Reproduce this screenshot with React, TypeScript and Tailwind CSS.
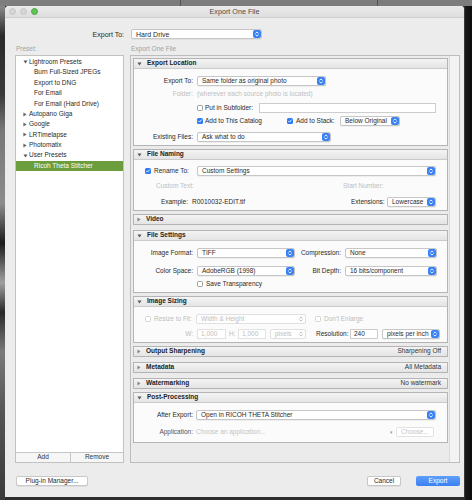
import React from "react";
import clsx from "clsx";

function Stepper({ disabled }: { disabled?: boolean }) {
  return (
    <span
      className={clsx(
        "flex h-[8px] w-[8px] shrink-0 items-center justify-center",
        !disabled && "rounded-[2px] bg-[#3a82f4]"
      )}
    >
      <svg
        viewBox="0 0 8 8"
        className="h-[8px] w-[8px]"
        fill="none"
        stroke={disabled ? "#b4b4b4" : "#ffffff"}
        strokeWidth="0.9"
        strokeLinecap="round"
        strokeLinejoin="round"
      >
        <path d="M2.7 3.2L4 1.9l1.3 1.3M2.7 4.8L4 6.1l1.3-1.3" />
      </svg>
    </span>
  );
}

function Select({ value, w, disabled }: { value: string; w: string; disabled?: boolean }) {
  return (
    <div
      className={clsx(
        "flex h-[10px] shrink-0 items-center justify-between rounded-[2px] border bg-white pl-[4px] pr-[0.5px]",
        disabled
          ? "border-[#e0e0e0] text-[#bcbcbc]"
          : "border-[#c6c6c6] text-[#2a2a2a] shadow-[0_0.5px_0.5px_rgba(0,0,0,0.1)]",
        w
      )}
    >
      <span className="whitespace-nowrap leading-none">{value}</span>
      <Stepper disabled={disabled} />
    </div>
  );
}

function Input({ value, w, disabled }: { value?: string; w: string; disabled?: boolean }) {
  return (
    <div
      className={clsx(
        "flex h-[10px] shrink-0 items-center border bg-white pl-[3px] leading-none",
        disabled ? "border-[#e2e2e2] text-[#bdbdbd]" : "border-[#cdcdcd] text-[#2a2a2a]",
        w
      )}
    >
      {value}
    </div>
  );
}

function Check({ on, disabled }: { on?: boolean; disabled?: boolean }) {
  if (on)
    return (
      <span className="flex h-[6px] w-[6px] shrink-0 items-center justify-center rounded-[1.5px] bg-[#2f7cf6]">
        <svg viewBox="0 0 6 6" className="h-[6px] w-[6px]" fill="none" stroke="#fff" strokeWidth="0.9" strokeLinecap="round" strokeLinejoin="round">
          <path d="M1.5 3.1l1 1 2-2.3" />
        </svg>
      </span>
    );
  return (
    <span
      className={clsx(
        "h-[6px] w-[6px] shrink-0 rounded-[1.5px] border bg-white",
        disabled ? "border-[#d4d4d4]" : "border-[#9c9c9c]"
      )}
    />
  );
}

function Label({ children, gray }: { children: React.ReactNode; gray?: boolean }) {
  return (
    <span className={clsx("w-[59px] shrink-0 text-right leading-none", gray && "text-[#bdbdbd]")}>
      {children}
    </span>
  );
}

function Row({ mt, children }: { mt?: string; children: React.ReactNode }) {
  return <div className={clsx("flex h-[10px] items-center", mt)}>{children}</div>;
}

function Section({
  title,
  open,
  right,
  mt,
  body,
  children,
}: {
  title: string;
  open?: boolean;
  right?: string;
  mt?: string;
  body?: string;
  children?: React.ReactNode;
}) {
  return (
    <div className={clsx("border border-[#b4b4b4] bg-[#fafafa]", mt)}>
      <div className="flex h-[9px] items-center bg-gradient-to-b from-[#f4f4f4] to-[#e4e4e4] pl-[3px] pr-[6px]">
        {open ? (
          <svg viewBox="0 0 6 5" className="h-[4px] w-[5px]">
            <path d="M0.5 0.5h5L3 4.5z" fill="#555" />
          </svg>
        ) : (
          <svg viewBox="0 0 5 6" className="h-[5px] w-[4px]">
            <path d="M0.5 0.5v5l4-2.5z" fill="#8a8a8a" />
          </svg>
        )}
        <span className="ml-[5px] text-[6.5px] font-bold leading-none text-[#222]">{title}</span>
        {right && <span className="ml-auto leading-none text-[#333]">{right}</span>}
      </div>
      {open && <div className={clsx("border-t border-[#cbcbcb] bg-[#fbfbfb]", body)}>{children}</div>}
    </div>
  );
}

const presets: { name: string; level: 0 | 1; open?: boolean; selected?: boolean }[] = [
  { name: "Lightroom Presets", level: 0, open: true },
  { name: "Burn Full-Sized JPEGs", level: 1 },
  { name: "Export to DNG", level: 1 },
  { name: "For Email", level: 1 },
  { name: "For Email (Hard Drive)", level: 1 },
  { name: "Autopano Giga", level: 0 },
  { name: "Google", level: 0 },
  { name: "LRTimelapse", level: 0 },
  { name: "Photomatix", level: 0 },
  { name: "User Presets", level: 0, open: true },
  { name: "Ricoh Theta Stitcher", level: 1, selected: true },
];

function PresetList() {
  return (
    <div className="flex h-[408px] w-[109px] flex-col border border-[#c2c2c2] bg-white">
      <div className="flex-1 pt-[1px]">
        {presets.map((p) => (
          <div
            key={p.name}
            className={clsx(
              "flex h-[10.4px] items-center leading-none",
              p.selected ? "bg-[#6b9d3c] text-white" : "text-[#2a2a2a]"
            )}
          >
            {p.level === 0 ? (
              <>
                <span className="ml-[7px] flex w-[6px] items-center">
                  {p.open ? (
                    <svg viewBox="0 0 6 5" className="h-[4px] w-[5px]">
                      <path d="M0.5 0.5h5L3 4.5z" fill="#555" />
                    </svg>
                  ) : (
                    <svg viewBox="0 0 5 6" className="h-[5px] w-[4px]">
                      <path d="M0.5 0.5v5l4-2.5z" fill="#666" />
                    </svg>
                  )}
                </span>
                <span>{p.name}</span>
              </>
            ) : (
              <span className="ml-[18px]">{p.name}</span>
            )}
          </div>
        ))}
      </div>
      <div className="flex h-[10px] border-t border-[#c6c6c6] bg-[#f6f6f6] text-[#333]">
        <span className="flex w-[55px] items-center justify-center border-r border-[#c6c6c6] leading-none">Add</span>
        <span className="flex flex-1 items-center justify-center leading-none">Remove</span>
      </div>
    </div>
  );
}

function SettingsPanel() {
  return (
    <div className="flex h-[408px] w-[330px] border border-[#bdbdbd] bg-[#ebebeb]">
      <div className="w-[318px] pl-[2px] pr-[1px] pt-[2px]">
        <Section title="Export Location" open body="pt-[7px] pb-[3px]">
          <Row>
            <Label>Export To:</Label>
            <span className="ml-[4px]" />
            <Select value="Same folder as original photo" w="w-[129px]" />
          </Row>
          <Row mt="mt-[3px]">
            <Label gray>Folder:</Label>
            <span className="ml-[4px] leading-none text-[#c0c0c0]">(wherever each source photo is located)</span>
          </Row>
          <Row mt="mt-[4px]">
            <span className="w-[63px] shrink-0" />
            <div className="flex w-[62px] shrink-0 items-center">
              <Check />
              <span className="ml-[2px] leading-none">Put in Subfolder:</span>
            </div>
            <Input w="w-[177px]" />
          </Row>
          <Row mt="mt-[3px]">
            <span className="w-[63px] shrink-0" />
            <div className="flex w-[90px] shrink-0 items-center">
              <Check on />
              <span className="ml-[2px] leading-none">Add to This Catalog</span>
            </div>
            <div className="flex w-[53px] shrink-0 items-center">
              <Check on />
              <span className="ml-[3px] leading-none">Add to Stack:</span>
            </div>
            <Select value="Below Original" w="w-[60px]" />
          </Row>
          <Row mt="mt-[6px]">
            <Label>Existing Files:</Label>
            <span className="ml-[4px]" />
            <Select value="Ask what to do" w="w-[134px]" />
          </Row>
        </Section>

        <Section title="File Naming" open mt="mt-[3px]" body="pt-[6px] pb-[3px]">
          <Row>
            <div className="flex w-[63px] shrink-0 items-center pl-[11px]">
              <Check on />
              <span className="ml-[3px] leading-none">Rename To:</span>
            </div>
            <Select value="Custom Settings" w="w-[239px]" />
          </Row>
          <Row mt="mt-[5px]">
            <span className="w-[209px] shrink-0 pl-[22px] leading-none text-[#c0c0c0]">Custom Text:</span>
            <span className="leading-none text-[#c0c0c0]">Start Number:</span>
          </Row>
          <Row mt="mt-[6px]">
            <span className="w-[54px] shrink-0 text-right leading-none">Example:</span>
            <span className="ml-[4px] w-[159px] shrink-0 leading-none">R0010032-EDIT.tif</span>
            <span className="w-[32px] shrink-0 leading-none">Extensions:</span>
            <span className="ml-[4px]" />
            <Select value="Lowercase" w="w-[49px]" />
          </Row>
        </Section>

        <Section title="Video" mt="mt-[3px]" />

        <Section title="File Settings" open mt="mt-[5px]" body="pt-[7px] pb-[3px]">
          <Row>
            <Label>Image Format:</Label>
            <span className="ml-[4px]" />
            <Select value="TIFF" w="w-[98px]" />
            <span className="w-[46px] shrink-0 text-right leading-none">Compression:</span>
            <span className="ml-[4px]" />
            <Select value="None" w="w-[92px]" />
          </Row>
          <Row mt="mt-[8px]">
            <Label>Color Space:</Label>
            <span className="ml-[4px]" />
            <Select value="AdobeRGB (1998)" w="w-[98px]" />
            <span className="w-[46px] shrink-0 text-right leading-none">Bit Depth:</span>
            <span className="ml-[4px]" />
            <Select value="16 bits/component" w="w-[92px]" />
          </Row>
          <Row mt="mt-[3px]">
            <span className="w-[63px] shrink-0" />
            <Check />
            <span className="ml-[3px] leading-none">Save Transparency</span>
          </Row>
        </Section>

        <Section title="Image Sizing" open mt="mt-[3px]" body="pt-[7px] pb-[3px]">
          <Row>
            <div className="flex w-[62px] shrink-0 items-center pl-[11px]">
              <Check disabled />
              <span className="ml-[3px] leading-none text-[#bdbdbd]">Resize to Fit:</span>
            </div>
            <Select value="Width & Height" w="w-[110px]" disabled />
            <div className="ml-[9px] flex items-center">
              <Check disabled />
              <span className="ml-[3px] leading-none text-[#bdbdbd]">Don't Enlarge</span>
            </div>
          </Row>
          <Row mt="mt-[5px]">
            <Label gray>W:</Label>
            <span className="ml-[4px]" />
            <Input value="1,000" w="w-[29px]" disabled />
            <span className="ml-[3px] w-[9px] shrink-0 leading-none text-[#bdbdbd]">H:</span>
            <Input value="1,000" w="w-[28px]" disabled />
            <span className="ml-[4px]" />
            <Select value="pixels" w="w-[36px]" disabled />
            <span className="ml-[10px] w-[31px] shrink-0 leading-none">Resolution:</span>
            <span className="ml-[3px]" />
            <Input value="240" w="w-[28px]" />
            <span className="ml-[4px]" />
            <Select value="pixels per inch" w="w-[58px]" />
          </Row>
        </Section>

        <Section title="Output Sharpening" right="Sharpening Off" mt="mt-[3px]" />
        <Section title="Metadata" right="All Metadata" mt="mt-[5px]" />
        <Section title="Watermarking" right="No watermark" mt="mt-[5px]" />

        <Section title="Post-Processing" open mt="mt-[3px]" body="pt-[7px] pb-[5px]">
          <Row>
            <Label>After Export:</Label>
            <span className="ml-[3px]" />
            <Select value="Open in RICOH THETA Stitcher" w="w-[240px]" />
          </Row>
          <Row mt="mt-[7px]">
            <span className="w-[59px] shrink-0 text-right leading-none text-[#555]">Application:</span>
            <span className="ml-[3px] w-[190px] shrink-0 leading-none text-[#c4c4c4]">Choose an application...</span>
            <span className="w-[10px] shrink-0 text-center text-[5px] leading-none text-[#999]">▾</span>
            <span className="flex h-[10px] w-[38px] items-center justify-center rounded-[2px] border border-[#e2e2e2] bg-white leading-none text-[#c4c4c4]">
              Choose...
            </span>
          </Row>
        </Section>
      </div>
      <div className="w-[10px] border-l border-[#dadada] bg-[#f3f3f3]" />
    </div>
  );
}

export default function App() {
  return (
    <div className="h-[500px] w-[472px] overflow-hidden bg-[#2e2e2e] font-['Liberation_Sans',Arial,sans-serif] text-[6.5px] text-[#2a2a2a]">
      <div className="flex h-[6px] bg-[#7d7d7d]">
        <span className="w-[181px] border-r border-[#555]" />
        <span className="w-[197px] border-r border-[#555]" />
      </div>
      <div className="flex">
        <div className="h-[494px] w-[5px] bg-[linear-gradient(to_bottom,#8a8a8a_0%,#2a2a2a_6%,#3a3a3a_18%,#777_25%,#8c8c8c_40%,#1c1c1c_48%,#a0a0a0_56%,#2a2a2a_62%,#7a7a7a_70%,#555_82%,#3a3a3a_100%)]" />
        <div className="flex h-[491px] w-[460px] flex-col overflow-hidden rounded-t-[4px] border-r border-[#3a3a3a] bg-[#ececec]">
          <div className="relative flex h-[12px] shrink-0 items-center border-b border-[#cfcfcf] bg-gradient-to-b from-[#ebebeb] to-[#dedede]">
            <div className="flex items-center gap-[4px] pl-[4px]">
              <span className="h-[7px] w-[7px] rounded-full border border-[#c4c4c4] bg-[#d6d6d6]" />
              <span className="h-[7px] w-[7px] rounded-full border border-[#c4c4c4] bg-[#d6d6d6]" />
              <span className="h-[7px] w-[7px] rounded-full border border-[#4aa63c] bg-[#5fc454]" />
            </div>
            <span className="absolute inset-x-0 text-center text-[7.2px] leading-none text-[#4b4b4b]">Export One File</span>
          </div>

          <div className="mt-[11px] flex h-[10px] shrink-0 items-center text-[7px]">
            <span className="w-[119px] text-right leading-none">Export To:</span>
            <span className="ml-[7px]" />
            <Select value="Hard Drive" w="w-[131px]" />
          </div>

          <div className="mt-[6px] flex h-[8px] shrink-0 items-center leading-none text-[#a2a2a2]">
            <span className="w-[126px] pl-[11px]">Preset:</span>
            <span>Export One File</span>
          </div>

          <div className="mt-[2px] flex shrink-0">
            <div className="ml-[10px]">
              <PresetList />
            </div>
            <div className="ml-[6px]">
              <SettingsPanel />
            </div>
          </div>

          <div className="mt-[13px] flex h-[10px] shrink-0 items-center pr-[4px]">
            <span className="ml-[11px] flex h-[10px] w-[72px] items-center justify-center rounded-[2px] border border-[#c8c8c8] bg-white leading-none shadow-[0_0.5px_0.5px_rgba(0,0,0,0.12)]">
              Plug-in Manager...
            </span>
            <span className="ml-auto flex h-[10px] w-[34px] items-center justify-center rounded-[2px] border border-[#c8c8c8] bg-white leading-none shadow-[0_0.5px_0.5px_rgba(0,0,0,0.12)]">
              Cancel
            </span>
            <span className="ml-[15px] flex h-[10px] w-[44px] items-center justify-center rounded-[2px] bg-gradient-to-b from-[#5f9ff9] to-[#3b7ff2] leading-none text-white">
              Export
            </span>
          </div>
        </div>
        <div className="h-[494px] flex-1 bg-[linear-gradient(to_right,#1a1a1a,#0c0c0c)]" />
      </div>
    </div>
  );
}
